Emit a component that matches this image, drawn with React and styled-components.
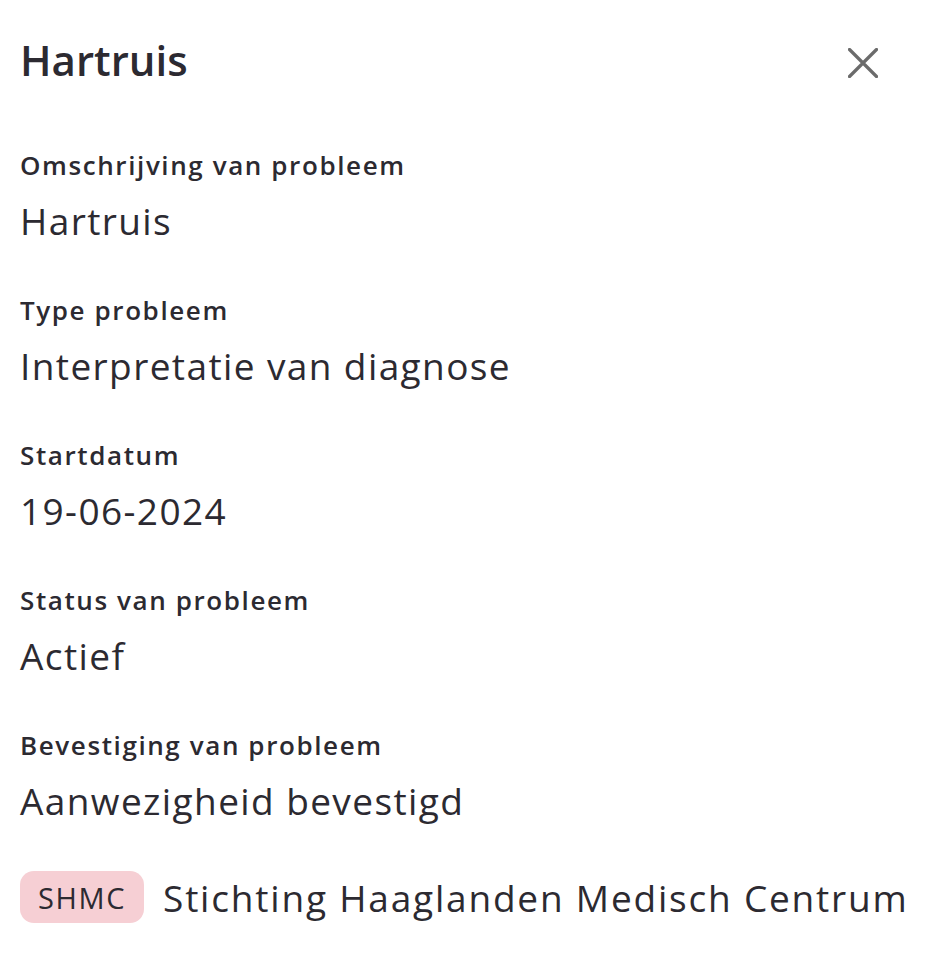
import React from 'react';
import styled, {createGlobalStyle} from 'styled-components';

//-- Styles --//
const colors = {
	text: '#2c2a31',
	icon: '#6b6b6b',
	badge: '#f6cfd4',
	background: '#ffffff',
};

const GlobalStyle = createGlobalStyle`
	body {
		margin: 0;
		background: ${colors.background};
		font-family: 'Open Sans', Lato, sans-serif;
		color: ${colors.text};
	}
`;

const Panel = styled.div`
	display: flex;
	flex-direction: column;
	padding: 32px 20px 40px 20px;
`;

const Header = styled.div`
	display: flex;
	justify-content: space-between;
	align-items: flex-start;
	margin-bottom: 60px;
`;

const Title = styled.h1`
	margin: 0;
	font-size: 42px;
	line-height: 56px;
	font-weight: 600;
`;

const CloseButton = styled.button`
	display: flex;
	align-items: center;
	justify-content: center;
	width: 30px;
	height: 30px;
	margin: 16px 44px 0 0;
	padding: 0;
	border: none;
	background: none;
	cursor: pointer;
`;

const FieldList = styled.dl`
	display: flex;
	flex-direction: column;
	gap: 48px;
	margin: 0;
`;

const Field = styled.div`
	display: flex;
	flex-direction: column;
	gap: 15px;
`;

const Label = styled.dt`
	font-size: 26px;
	line-height: 34px;
	font-weight: 600;
	letter-spacing: 1.6px;
`;

const Value = styled.dd`
	margin: 0;
	font-size: 37px;
	line-height: 48px;
	letter-spacing: 1.4px;
`;

const SourceRow = styled.div`
	display: flex;
	align-items: center;
	gap: 19px;
	margin-top: 46px;
`;

const Badge = styled.span`
	display: inline-flex;
	align-items: center;
	justify-content: center;
	height: 52px;
	padding: 0 18px;
	border-radius: 14px;
	background: ${colors.badge};
	font-size: 29px;
	letter-spacing: 1.6px;
`;

const SourceName = styled.span`
	font-size: 37px;
	letter-spacing: 1.8px;
`;

const fields = [
	{label: 'Omschrijving van probleem', value: 'Hartruis'},
	{label: 'Type probleem', value: 'Interpretatie van diagnose'},
	{label: 'Startdatum', value: '19-06-2024'},
	{label: 'Status van probleem', value: 'Actief'},
	{label: 'Bevestiging van probleem', value: 'Aanwezigheid bevestigd'},
];

const App = () => {
	return (
		<Panel>
			<GlobalStyle />
			<Header>
				<Title>Hartruis</Title>
				<CloseButton aria-label='Sluiten'>
					<svg width='30' height='30' viewBox='0 0 30 30'>
						<path
							d='M1.5 1.5 L28.5 28.5 M28.5 1.5 L1.5 28.5'
							stroke={colors.icon}
							strokeWidth='3.2'
							strokeLinecap='round'
						/>
					</svg>
				</CloseButton>
			</Header>
			<FieldList>
				{fields.map((f) => (
					<Field key={f.label}>
						<Label>{f.label}</Label>
						<Value>{f.value}</Value>
					</Field>
				))}
			</FieldList>
			<SourceRow>
				<Badge>SHMC</Badge>
				<SourceName>Stichting Haaglanden Medisch Centrum</SourceName>
			</SourceRow>
		</Panel>
	);
};

export default App;
